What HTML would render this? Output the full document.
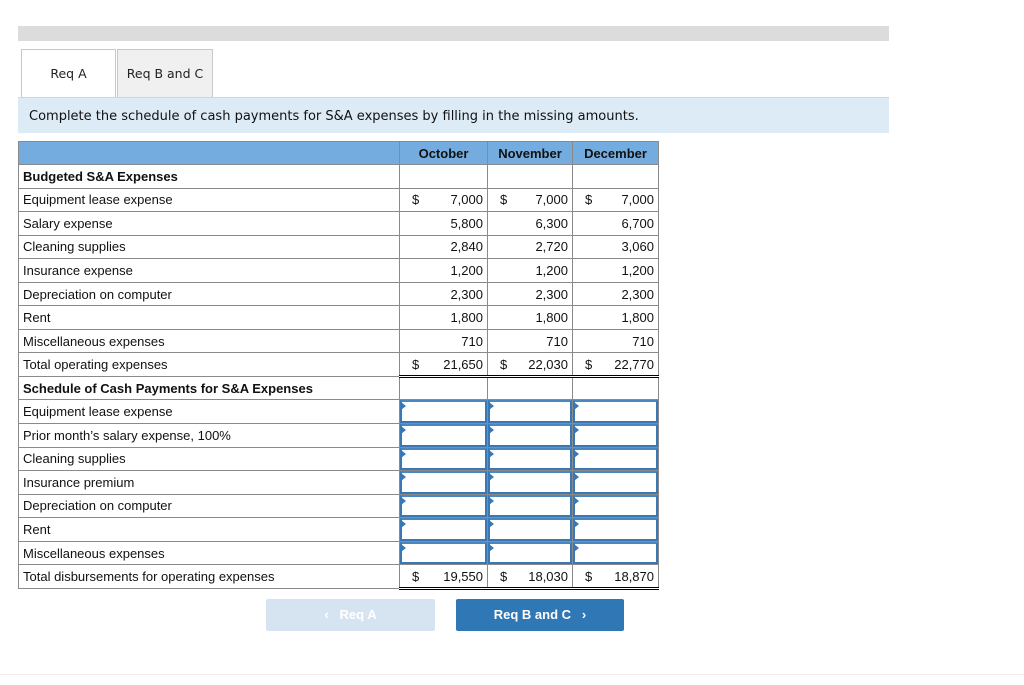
<!DOCTYPE html>
<html><head><style>
body{margin:0;width:1024px;height:685px;background:#fff;font-family:"Liberation Sans",Arial,sans-serif;position:relative;overflow:hidden}
.a{position:absolute}
.tab{position:absolute;top:49px;height:48px;border:1px solid #c8c8c8;border-bottom:none;box-sizing:border-box;font-family:"DejaVu Sans",Verdana,sans-serif;font-size:12.5px;display:flex;align-items:center;justify-content:center;color:#222}
table{position:absolute;left:18px;top:141px;border-collapse:collapse;font-size:13px;color:#111}
td{border:1px solid #8a8a8a;height:23.55px;padding:0 4px;box-sizing:border-box;white-space:nowrap}
tr.h td{background:#74acdf;font-weight:bold;text-align:center;height:23px}
td.n{text-align:right;position:relative}
td.n span{position:absolute;left:12px}
td.inp{padding:0;position:relative}
td.inp div{position:absolute;left:0;top:0;right:0;bottom:0;border:2px solid #3a78b5;border-top-color:#4a86c0}
td.inp i{position:absolute;left:1px;top:2px;width:0;height:0;border-top:4px solid transparent;border-bottom:4px solid transparent;border-left:5px solid #3a78b5}
.tot td.n{border-bottom:3px double #000}
.tot2 td.n{border-top:1px solid #000;border-bottom:3px double #000}
</style></head><body>
<div class="a" style="left:18px;top:26px;width:871px;height:15px;background:#dcdcdc"></div>
<div class="tab" style="left:21px;width:95px;background:#fff">Req A</div>
<div class="tab" style="left:117px;width:96px;background:#f0f0f0">Req B and C</div>
<div class="a" style="left:18px;top:97px;width:871px;height:36px;background:#ddebf7;border-top:1px solid #c8d8e8;box-sizing:border-box;font-family:'DejaVu Sans',Verdana,sans-serif;font-size:13px;line-height:38px;padding-left:11px;color:#111">Complete the schedule of cash payments for S&amp;A expenses by filling in the missing amounts.</div>
<table>
<colgroup><col style="width:381px"><col style="width:88px"><col style="width:85px"><col style="width:86px"></colgroup>
<tr class="h"><td></td><td>October</td><td>November</td><td>December</td></tr>
<tr><td><b>Budgeted S&amp;A Expenses</b></td><td></td><td></td><td></td></tr>
<tr><td>Equipment lease expense</td><td class="n"><span>$</span>7,000</td><td class="n"><span>$</span>7,000</td><td class="n"><span>$</span>7,000</td></tr>
<tr><td>Salary expense</td><td class="n">5,800</td><td class="n">6,300</td><td class="n">6,700</td></tr>
<tr><td>Cleaning supplies</td><td class="n">2,840</td><td class="n">2,720</td><td class="n">3,060</td></tr>
<tr><td>Insurance expense</td><td class="n">1,200</td><td class="n">1,200</td><td class="n">1,200</td></tr>
<tr><td>Depreciation on computer</td><td class="n">2,300</td><td class="n">2,300</td><td class="n">2,300</td></tr>
<tr><td>Rent</td><td class="n">1,800</td><td class="n">1,800</td><td class="n">1,800</td></tr>
<tr><td>Miscellaneous expenses</td><td class="n">710</td><td class="n">710</td><td class="n">710</td></tr>
<tr class="tot"><td>Total operating expenses</td><td class="n"><span>$</span>21,650</td><td class="n"><span>$</span>22,030</td><td class="n"><span>$</span>22,770</td></tr>
<tr><td><b>Schedule of Cash Payments for S&amp;A Expenses</b></td><td></td><td></td><td></td></tr>
<tr><td>Equipment lease expense</td><td class="inp"><div></div><i></i></td><td class="inp"><div></div><i></i></td><td class="inp"><div></div><i></i></td></tr>
<tr><td>Prior month’s salary expense, 100%</td><td class="inp"><div></div><i></i></td><td class="inp"><div></div><i></i></td><td class="inp"><div></div><i></i></td></tr>
<tr><td>Cleaning supplies</td><td class="inp"><div></div><i></i></td><td class="inp"><div></div><i></i></td><td class="inp"><div></div><i></i></td></tr>
<tr><td>Insurance premium</td><td class="inp"><div></div><i></i></td><td class="inp"><div></div><i></i></td><td class="inp"><div></div><i></i></td></tr>
<tr><td>Depreciation on computer</td><td class="inp"><div></div><i></i></td><td class="inp"><div></div><i></i></td><td class="inp"><div></div><i></i></td></tr>
<tr><td>Rent</td><td class="inp"><div></div><i></i></td><td class="inp"><div></div><i></i></td><td class="inp"><div></div><i></i></td></tr>
<tr><td>Miscellaneous expenses</td><td class="inp"><div></div><i></i></td><td class="inp"><div></div><i></i></td><td class="inp"><div></div><i></i></td></tr>
<tr class="tot2"><td>Total disbursements for operating expenses</td><td class="n"><span>$</span>19,550</td><td class="n"><span>$</span>18,030</td><td class="n"><span>$</span>18,870</td></tr>
</table>
<div class="a" style="left:266px;top:599px;width:169px;height:32px;background:#d6e4f2;border-radius:2px;color:#fff;font-weight:bold;font-size:13px;line-height:32px;text-align:center">&lsaquo;&nbsp;&nbsp;&nbsp;Req A</div>
<div class="a" style="left:456px;top:599px;width:168px;height:32px;background:#3077b6;border-radius:2px;color:#fff;font-weight:bold;font-size:13px;line-height:32px;text-align:center">Req B and C&nbsp;&nbsp;&nbsp;&rsaquo;</div>
<div class="a" style="left:0;top:674px;width:1024px;height:1px;background:#ececec"></div>
</body></html>
